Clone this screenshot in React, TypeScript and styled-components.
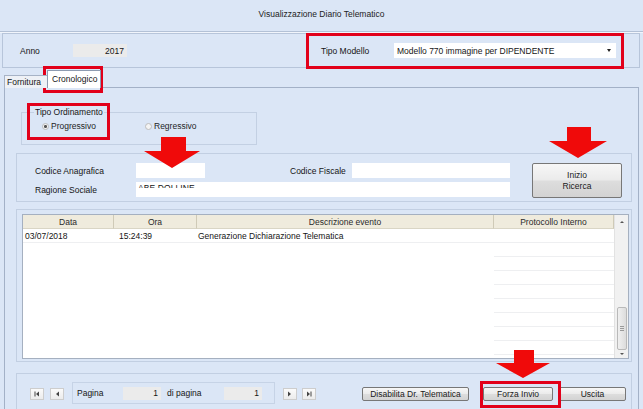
import React from 'react';
import styled, { createGlobalStyle } from 'styled-components';

const Global = createGlobalStyle`
  html, body { margin: 0; padding: 0; background: #dbe6f6; }
  body { font-family: "Liberation Sans", Arial, sans-serif; font-size: 8.5px; color: #151515; }
  * { box-sizing: border-box; }
`;

const Window = styled.div`
  position: relative;
  width: 643px;
  height: 409px;
  overflow: hidden;
  background: #dbe6f6;
  display: flex;
  flex-direction: column;
`;

const TitleBar = styled.div`
  flex: none;
  height: 32px;
  display: flex;
  align-items: center;
  justify-content: center;
  padding-bottom: 3px;
  border-bottom: 1px solid #b3c1d6;
  box-shadow: 0 1px 0 #f1f5fc;
  color: #222;
`;

const HeaderPanel = styled.div`
  flex: none;
  height: 35px;
  margin: 1px 3px 0 2px;
  border: 1px solid #b7c5da;
  display: flex;
  align-items: center;
  padding-left: 17px;
`;

const Label = styled.span<{ $w?: number; $pl?: number; $col?: number }>`
  flex: none;
  width: ${p => (p.$w ? `${p.$w}px` : 'auto')};
  padding-left: ${p => p.$pl ?? 0}px;
  grid-column: ${p => (p.$col ? `${p.$col}` : 'auto')};
  white-space: nowrap;
`;

const ReadOnlyBox = styled.div<{ $w: number }>`
  flex: none;
  width: ${p => p.$w}px;
  height: 13px;
  background: #ebebeb;
  display: flex;
  align-items: center;
  justify-content: flex-end;
  padding-right: 3px;
`;

const TipoGroup = styled.div`
  display: flex;
  align-items: center;
  margin-left: 194px;
`;

const Select = styled.div`
  width: 222px;
  height: 15px;
  background: #fff;
  display: flex;
  align-items: center;
  justify-content: space-between;
  padding: 0 5px 0 3px;
`;

const Caret = styled.span`
  width: 0;
  height: 0;
  border-left: 2.5px solid transparent;
  border-right: 2.5px solid transparent;
  border-top: 3px solid #222;
`;

const TabStrip = styled.div`
  flex: none;
  height: 20px;
  display: flex;
  align-items: flex-end;
  padding-left: 4px;
  margin-bottom: -1px;
  position: relative;
  z-index: 1;
`;

const Tab = styled.div<{ $active?: boolean }>`
  height: ${p => (p.$active ? 18 : 13)}px;
  width: ${p => (p.$active ? 54 : 44)}px;
  margin-left: ${p => (p.$active ? -1 : 0)}px;
  padding-left: ${p => (p.$active ? 4 : 2)}px;
  padding-bottom: ${p => (p.$active ? 2 : 0)}px;
  background: ${p => (p.$active ? '#ffffff' : '#eef1f6')};
  border: 1px solid ${p => (p.$active ? '#8d9bb1' : '#a7b3c6')};
  border-bottom: none;
  display: flex;
  align-items: center;
  overflow: hidden;
  white-space: nowrap;
`;

const TabPanel = styled.div`
  flex: 1;
  margin: 0 4px 0 4px;
  border: 1px solid #a3b1c7;
  border-bottom: none;
  display: flex;
  flex-direction: column;
  padding: 0 6px 0 11px;
`;

const OrdGroup = styled.fieldset`
  margin: 19px 0 0 5px;
  width: 236px;
  border: 1px solid #c3d0e3;
  padding: 0 0 13px 12px;
  min-width: 0;
`;

const Legend = styled.legend`
  padding: 0 1px;
  line-height: 10px;
`;

const RadioRow = styled.div`
  display: flex;
  align-items: center;
  height: 10px;
  margin-top: 4px;
  padding-left: 8px;
`;

const RadioItem = styled.label<{ $w?: number }>`
  display: flex;
  align-items: center;
  gap: 2px;
  width: ${p => (p.$w ? `${p.$w}px` : 'auto')};
  color: #1e1e1e;
`;

const RadioDot = styled.span<{ $checked?: boolean }>`
  width: 7px;
  height: 7px;
  border-radius: 50%;
  border: 1px solid #bdbdbd;
  background: ${p => (p.$checked ? 'radial-gradient(circle, #555 0 1.2px, #f2f2f2 1.8px)' : '#f4f4f4')};
`;

const GroupBox = styled.div<{ $mt: number }>`
  flex: none;
  margin-top: ${p => p.$mt}px;
  border: 1px solid #c2cfe2;
`;

const SearchGroup = styled(GroupBox)`
  height: 49px;
  display: flex;
  align-items: flex-start;
  padding: 9px 0 0 18px;
`;

const FieldGrid = styled.div`
  display: grid;
  grid-template-columns: 101px 69px 85px 62px 158px;
  grid-template-rows: 15px 15px;
  row-gap: 4px;
  align-items: center;
`;

const TextField = styled.div<{ $col: string }>`
  height: 15px;
  background: #fff;
  grid-column: ${p => p.$col};
  overflow: hidden;
  padding-left: 2px;
`;

const CutValue = styled.div`
  height: 4px;
  margin-top: 2px;
  overflow: hidden;
  line-height: 9px;
  letter-spacing: 0.1px;
  white-space: nowrap;
`;

const Button = styled.button<{ $w: number; $h: number }>`
  flex: none;
  width: ${p => p.$w}px;
  height: ${p => p.$h}px;
  font: inherit;
  color: #1a1a1a;
  line-height: 11px;
  padding: 0;
  border: 1px solid #777;
  border-radius: 2px;
  background: linear-gradient(#f7f7f7, #ebebeb 48%, #dddddd 52%, #d3d3d3);
`;

const SearchButton = styled(Button)`
  margin-left: 22px;
`;

const TableGroup = styled(GroupBox)`
  height: 153px;
  padding: 4px 2px 3px 5px;
`;

const Table = styled.div`
  height: 145px;
  border: 1px solid #a5b0c0;
  background: #fff;
  display: flex;
`;

const Grid = styled.div`
  flex: 1;
  display: grid;
  grid-template-columns: 91px 83px 297px 1fr;
  grid-auto-rows: 14px;
  align-content: start;
`;

const HeadCell = styled.div`
  background: #efebdd;
  border-right: 1px solid #cfcab7;
  border-bottom: 1px solid #d9d5c5;
  display: flex;
  align-items: center;
  justify-content: center;
  color: #2a2a2a;
`;

const Cell = styled.div<{ $pl: number; $line?: boolean }>`
  display: flex;
  align-items: center;
  padding-left: ${p => p.$pl}px;
  border-bottom: 1px solid ${p => (p.$line ? '#eeeff1' : 'transparent')};
  white-space: nowrap;
`;

const ScrollBar = styled.div`
  width: 14px;
  background: #f1f1f1;
  border-left: 1px solid #e2e2e2;
  display: flex;
  flex-direction: column;
  align-items: center;
`;

const ScrollArrow = styled.div<{ $up?: boolean }>`
  height: ${p => (p.$up ? 14 : 8)}px;
  width: 100%;
  display: flex;
  align-items: center;
  justify-content: center;
  &::before {
    content: '';
    border-left: 2px solid transparent;
    border-right: 2px solid transparent;
    ${p => (p.$up ? 'border-bottom: 2px solid #555;' : 'border-top: 2px solid #555;')}
  }
`;

const Track = styled.div`
  flex: 1;
  width: 100%;
  display: flex;
  flex-direction: column;
  justify-content: flex-end;
  align-items: center;
`;

const Thumb = styled.div`
  width: 10px;
  height: 43px;
  border: 1px solid #b9b9b9;
  border-radius: 2px;
  background: linear-gradient(90deg, #f0f0f0, #dcdcdc);
  display: flex;
  align-items: center;
  justify-content: center;
  &::before {
    content: '';
    width: 4px;
    height: 5px;
    background: repeating-linear-gradient(#9a9a9a 0 1px, transparent 1px 2px);
  }
`;

const BottomGroup = styled(GroupBox)`
  flex: 1;
  border-bottom: none;
  display: flex;
  align-items: flex-start;
  padding: 8px 0 0 13px;
`;

const NavBtn = styled.div<{ $ml: number }>`
  flex: none;
  width: 14px;
  height: 12px;
  margin-top: 6px;
  margin-left: ${p => p.$ml}px;
  border: 1px solid #cdcdcd;
  background: linear-gradient(#fbfbfb, #ececec);
  display: flex;
  align-items: center;
  justify-content: center;
`;

const PageBox = styled.div`
  flex: none;
  width: 203px;
  height: 22px;
  margin-left: 8px;
  border: 1px solid #c6d3e6;
  display: flex;
  align-items: center;
  padding-left: 4px;
`;

const ActionButton = styled(Button)<{ $ml: number }>`
  margin-top: 5px;
  margin-left: ${p => p.$ml}px;
`;

const RedFrame = styled.div<{ $x: number; $y: number; $w: number; $h: number }>`
  position: absolute;
  left: ${p => p.$x}px;
  top: ${p => p.$y}px;
  width: ${p => p.$w}px;
  height: ${p => p.$h}px;
  border: 3px solid #e2001a;
  pointer-events: none;
`;

const ArrowSvg = styled.svg<{ $x: number; $y: number }>`
  position: absolute;
  left: ${p => p.$x}px;
  top: ${p => p.$y}px;
  pointer-events: none;
`;

type ArrowProps = { x: number; y: number; w: number; h: number; s0: number; s1: number; hy: number };
const DownArrow = ({ x, y, w, h, s0, s1, hy }: ArrowProps) => (
  <ArrowSvg $x={x} $y={y} width={w} height={h} viewBox={`0 0 ${w} ${h}`}>
    <polygon points={`${s0},0 ${s1},0 ${s1},${hy} ${w},${hy} ${w / 2},${h} 0,${hy} ${s0},${hy}`} fill="#f00a0a" />
  </ArrowSvg>
);

const NavIcon = ({ dir, bar }: { dir: 'l' | 'r'; bar?: boolean }) => (
  <svg width="6" height="6" viewBox="0 0 6 6">
    {dir === 'l' ? (
      <>
        {bar && <rect x="0.5" y="0.5" width="1" height="5" fill="#444" />}
        <polygon points="5,0.5 5,5.5 2,3" fill="#444" />
      </>
    ) : (
      <>
        <polygon points="1,0.5 1,5.5 4,3" fill="#444" />
        {bar && <rect x="4.5" y="0.5" width="1" height="5" fill="#444" />}
      </>
    )}
  </svg>
);

const columns = ['Data', 'Ora', 'Descrizione evento', 'Protocollo Interno'];
const emptyRows = Array.from({ length: 8 });

export default function App() {
  return (
    <>
      <Global />
      <Window>
        <TitleBar>Visualizzazione Diario Telematico</TitleBar>

        <HeaderPanel>
          <Label $w={53}>Anno</Label>
          <ReadOnlyBox $w={54}>2017</ReadOnlyBox>
          <TipoGroup>
            <Label $w={73}>Tipo Modello</Label>
            <Select>
              <span>Modello 770 immagine per DIPENDENTE</span>
              <Caret />
            </Select>
          </TipoGroup>
        </HeaderPanel>

        <TabStrip>
          <Tab>Fornitura</Tab>
          <Tab $active>Cronologico</Tab>
        </TabStrip>

        <TabPanel>
          <OrdGroup>
            <Legend>Tipo Ordinamento</Legend>
            <RadioRow>
              <RadioItem $w={103}>
                <RadioDot $checked />
                Progressivo
              </RadioItem>
              <RadioItem>
                <RadioDot />
                Regressivo
              </RadioItem>
            </RadioRow>
          </OrdGroup>

          <SearchGroup $mt={8}>
            <FieldGrid>
              <Label $col={1}>Codice Anagrafica</Label>
              <TextField $col="2" />
              <Label $col={4}>Codice Fiscale</Label>
              <TextField $col="5" />
              <Label $col={1}>Ragione Sociale</Label>
              <TextField $col="2 / 6">
                <CutValue>ABE DOLLINE</CutValue>
              </TextField>
            </FieldGrid>
            <SearchButton $w={90} $h={35}>
              Inizio
              <br />
              Ricerca
            </SearchButton>
          </SearchGroup>

          <TableGroup $mt={7}>
            <Table>
              <Grid>
                {columns.map(c => (
                  <HeadCell key={c}>{c}</HeadCell>
                ))}
                <Cell $pl={2} $line>03/07/2018</Cell>
                <Cell $pl={5} $line>15:24:39</Cell>
                <Cell $pl={1} $line>Generazione Dichiarazione Telematica</Cell>
                <Cell $pl={1} $line />
                {emptyRows.map((_, i) => (
                  <React.Fragment key={i}>
                    <Cell $pl={0} />
                    <Cell $pl={0} />
                    <Cell $pl={0} />
                    <Cell $pl={0} $line />
                  </React.Fragment>
                ))}
              </Grid>
              <ScrollBar>
                <ScrollArrow $up />
                <Track>
                  <Thumb />
                </Track>
                <ScrollArrow />
              </ScrollBar>
            </Table>
          </TableGroup>

          <BottomGroup $mt={11}>
            <NavBtn $ml={0}>
              <NavIcon dir="l" bar />
            </NavBtn>
            <NavBtn $ml={6}>
              <NavIcon dir="l" />
            </NavBtn>
            <PageBox>
              <Label $w={46}>Pagina</Label>
              <ReadOnlyBox $w={38}>1</ReadOnlyBox>
              <Label $w={63} $pl={6}>di pagina</Label>
              <ReadOnlyBox $w={38}>1</ReadOnlyBox>
            </PageBox>
            <NavBtn $ml={8}>
              <NavIcon dir="r" />
            </NavBtn>
            <NavBtn $ml={5}>
              <NavIcon dir="r" bar />
            </NavBtn>
            <ActionButton $w={107} $h={14} $ml={46}>Disabilita Dr. Telematica</ActionButton>
            <ActionButton $w={70} $h={14} $ml={14}>Forza Invio</ActionButton>
            <ActionButton $w={67} $h={14} $ml={6}>Uscita</ActionButton>
          </BottomGroup>
        </TabPanel>

        <RedFrame $x={306} $y={33} $w={318} $h={36} />
        <RedFrame $x={43} $y={66} $w={60} $h={27} />
        <RedFrame $x={27} $y={103} $w={83} $h={37} />
        <RedFrame $x={480} $y={381} $w={81} $h={27} />

        <DownArrow x={144} y={137} w={56} h={31} s0={17} s1={42} hy={14} />
        <DownArrow x={549} y={127} w={58} h={31} s0={18} s1={42} hy={14} />
        <DownArrow x={496} y={350} w={54} h={28} s0={18} s1={38} hy={13} />
      </Window>
    </>
  );
}
